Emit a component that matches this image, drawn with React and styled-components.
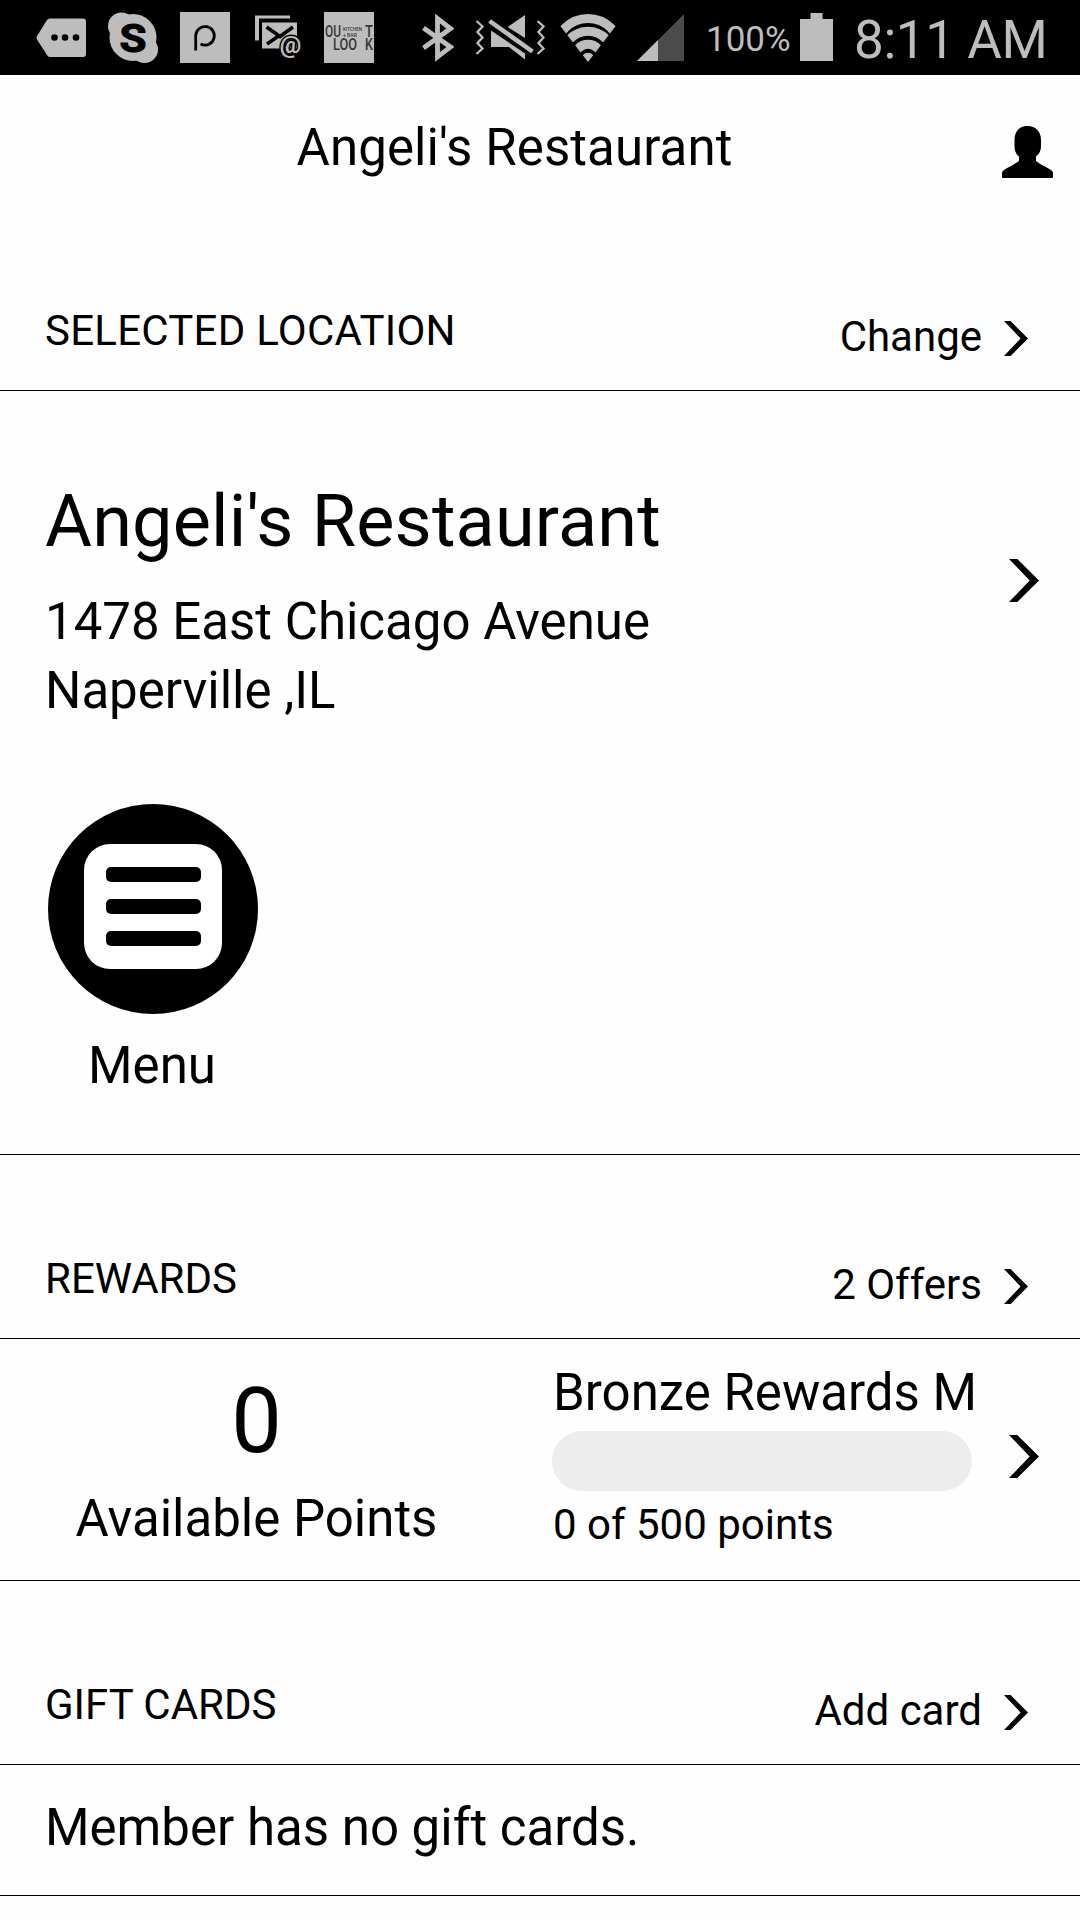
import styled, { createGlobalStyle } from "styled-components";

const GlobalStyle = createGlobalStyle`
  * {
    box-sizing: border-box;
  }
  body {
    margin: 0;
    background-color: #fefefe;
    color: #000;
    font-family: Roboto, "Liberation Sans", sans-serif;
  }
  svg {
    display: block;
    flex-shrink: 0;
  }
`;

const Screen = styled.div`
  width: 1080px;
  height: 1920px;
  overflow: hidden;
  display: flex;
  flex-direction: column;
`;

const StatusBar = styled.div`
  height: 75px;
  flex-shrink: 0;
  padding-left: 36px;
  background-color: #000;
  color: #bdbdbd;
  display: flex;
  align-items: center;
`;
const Notifications = styled.div`
  display: flex;
  align-items: center;
  gap: 22px;
`;
const StatusItem = styled.div`
  margin-left: ${(props) => props.$left}px;
`;
const BatteryText = styled.span`
  width: 94px;
  margin-left: 22px;
  padding-top: 5px;
  font-size: 35px;
  line-height: 42px;
`;
const Clock = styled.span`
  margin-left: 21px;
  padding-top: 5px;
  font-size: 53px;
  line-height: 64px;
  letter-spacing: -0.4px;
  white-space: nowrap;
`;

const AppBar = styled.header`
  height: 231px;
  flex-shrink: 0;
  padding: 42px 27px 0;
  display: flex;
  align-items: flex-start;
`;
const AppTitle = styled.h1`
  flex: 1;
  margin: 0;
  font-size: 51px;
  font-weight: 400;
  line-height: 62px;
  letter-spacing: 0.1px;
  text-align: center;
`;
const UserButton = styled.div`
  padding-top: 9px;
`;

const SectionHeader = styled.div`
  height: 85px;
  flex-shrink: 0;
  margin-top: ${(props) => props.$top || 0}px;
  padding: 0 52px 0 45px;
  border-bottom: 1px solid #000;
  display: flex;
  justify-content: space-between;
  align-items: flex-start;
  font-size: 42px;
  line-height: 50px;
`;
const SectionTitle = styled.span`
  letter-spacing: ${(props) => props.$tracking || 0}px;
`;
const SectionAction = styled.div`
  padding-top: 6px;
  display: flex;
  gap: 22px;
  svg {
    margin-top: 9px;
  }
`;

const LocationBody = styled.section`
  height: 764px;
  flex-shrink: 0;
  padding: 87px 41px 0 45px;
  border-bottom: 1px solid #000;
`;
const LocationRow = styled.div`
  display: flex;
  justify-content: space-between;
  align-items: center;
  height: 205px;
`;
const LocationInfo = styled.div`
  align-self: flex-start;
`;
const LocationName = styled.h2`
  margin: 0 0 21px;
  font-size: 72px;
  font-weight: 400;
  line-height: 88px;
  letter-spacing: 0.17px;
`;
const Address = styled.p`
  margin: 0;
  font-size: 51px;
  line-height: 69px;
`;
const MenuTile = styled.div`
  width: 210px;
  margin: 121px 0 0 3px;
  display: flex;
  flex-direction: column;
  align-items: center;
  gap: 21px;
  font-size: 51px;
  line-height: 62px;
`;
const MenuLabel = styled.span`
  padding-right: 2px;
`;
const MenuCircle = styled.div`
  width: 210px;
  height: 210px;
  border-radius: 50%;
  background-color: #000;
  padding-bottom: 5px;
  display: flex;
  align-items: center;
  justify-content: center;
`;
const MenuCard = styled.div`
  width: 138px;
  height: 125px;
  border-radius: 26px;
  background-color: #fff;
  display: flex;
  flex-direction: column;
  align-items: center;
  justify-content: center;
  gap: 17px;
`;
const MenuLine = styled.div`
  width: 95px;
  height: 15px;
  border-radius: 5px;
  background-color: #000;
`;

const RewardsBody = styled.section`
  height: 242px;
  flex-shrink: 0;
  padding-right: 41px;
  border-bottom: 1px solid #000;
  display: flex;
  align-items: flex-start;
`;
const Points = styled.div`
  width: 513px;
  padding-top: 29px;
  text-align: center;
  font-size: 51px;
  line-height: 62px;
`;
const PointsValue = styled.div`
  font-size: 90px;
  line-height: 108px;
  margin-bottom: 12px;
`;
const Level = styled.div`
  width: 426px;
  margin-left: 39px;
  padding-top: 23px;
  font-size: 42px;
  line-height: 50px;
  white-space: nowrap;
`;
const LevelName = styled.div`
  font-size: 51px;
  line-height: 62px;
  padding-left: 1px;
`;
const Progress = styled.div`
  width: 420px;
  height: 60px;
  margin: 7px 0 9px;
  border-radius: 30px;
  background-color: #ededed;
`;
const ProgressText = styled.div`
  padding-left: 1px;
`;
const RewardsArrow = styled.div`
  margin-left: auto;
  padding-top: 96px;
`;

const GiftBody = styled.section`
  height: 131px;
  flex-shrink: 0;
  padding: 32px 45px 0;
  border-bottom: 1px solid #000;
  font-size: 51px;
  line-height: 62px;
`;

const Arrow = ({ large }) => (
  <svg width={large ? 30 : 24} height={large ? 43 : 35} viewBox="0 0 29 43" preserveAspectRatio="none">
    <path d="M0 0H8L29 21.5L8 43H0L20 21.5Z" />
  </svg>
);

const UserIcon = () => (
  <svg width="51" height="52" viewBox="0 0 51 52">
    <path d="M25.500 0C34 0 39 6 39 14V20C39 25 37 28 34 30.500V35C39 39 45 41 49 44Q51 45.500 51 47V51Q51 52 50 52H1Q0 52 0 51V47Q0 45.500 2 44C6 41 12 39 17 35V30.500C14 28 12.500 25 12.500 20V14C12.500 6 17 0 25.500 0Z" />
  </svg>
);

const MoreIcon = () => (
  <svg width="50" height="40" viewBox="0 0 50 40" fill="#bdbdbd">
    <path d="M14 0.500H47Q50 0.500 50 3.500V36Q50 39 47 39H14Q12 39 11 37L1 21.500Q0 19.500 1 18L11 2Q12 0.500 14 0.500Z" />
    <g fill="#000">
      <circle cx="18.500" cy="19.500" r="3.300" />
      <circle cx="29" cy="19.500" r="3.300" />
      <circle cx="40" cy="19.500" r="3.300" />
    </g>
  </svg>
);

const SkypeIcon = () => (
  <svg width="50" height="51" viewBox="0 0 50 51" fill="#bdbdbd">
    <circle cx="25" cy="25.500" r="23.500" />
    <circle cx="13.500" cy="14" r="13.500" />
    <circle cx="36.500" cy="37.500" r="13.500" />
    <text
      x="25"
      y="39.500"
      fill="#000"
      stroke="#000"
      strokeWidth="1"
      fontFamily="Roboto, sans-serif"
      fontWeight="700"
      fontSize="39"
      textAnchor="middle"
      textLength="27"
      lengthAdjust="spacingAndGlyphs"
    >
      S
    </text>
  </svg>
);

const PIcon = () => (
  <svg width="50" height="51" viewBox="0 0 50 51">
    <rect width="50" height="51" fill="#bdbdbd" />
    <path d="M15.700 38.500V23.500A9.300 9.300 0 1 1 20.500 32" fill="none" stroke="#000" strokeWidth="2.800" />
  </svg>
);

const MailIcon = () => (
  <svg width="50" height="46" viewBox="-3 0 50 46" fill="#bdbdbd">
    <path d="M0 0.500H35V3.500H4V25.500H0Z" />
    <path d="M7 7.500H42V33.500H7Z" />
    <path d="M11.500 12L25 21.500L38 12M25 20L12 29" stroke="#000" strokeWidth="3.500" fill="none" />
    <text
      x="35.500"
      y="38"
      textAnchor="middle"
      fontFamily="Roboto, sans-serif"
      fontSize="24"
      fontWeight="700"
      stroke="#000"
      strokeWidth="3"
      paintOrder="stroke"
    >
      @
    </text>
  </svg>
);

const OutlookIcon = () => (
  <svg width="50" height="51" viewBox="0 0 50 51" fontFamily="Roboto, sans-serif" fontSize="16.500" fontWeight="500" fill="#3a3634">
    <rect width="50" height="51" fill="#bdbdbd" />
    <text x="1" y="24.500" textLength="16" lengthAdjust="spacingAndGlyphs">OU</text>
    <text x="41" y="24.500" textLength="8" lengthAdjust="spacingAndGlyphs">T</text>
    <text x="9" y="37.500" textLength="24" lengthAdjust="spacingAndGlyphs">LOO</text>
    <text x="41" y="37.500" textLength="8" lengthAdjust="spacingAndGlyphs">K</text>
    <text x="19" y="18.500" fontSize="5" textLength="19" lengthAdjust="spacingAndGlyphs">KITCHEN</text>
    <text x="19" y="24.500" fontSize="5" textLength="14" lengthAdjust="spacingAndGlyphs">+ BAR</text>
  </svg>
);

const BluetoothIcon = () => (
  <svg width="32" height="48" viewBox="0 0 32 48">
    <path d="M1.500 14L28.500 33L15.500 43V4.500L28.500 14.500L1.500 34" fill="none" stroke="#bdbdbd" strokeWidth="4.800" />
  </svg>
);

const MuteIcon = () => (
  <svg width="70" height="50" viewBox="0 -4 70 50" fill="#bdbdbd">
    <path d="M50 -2V21L32.700 10Z" />
    <path d="M16 13.500L50 36.500V42.500L34 30H16Z" />
    <path d="M14.500 4L57.500 34.500" stroke="#000" strokeWidth="9" />
    <path d="M14.500 4L57.500 34.500" stroke="#bdbdbd" strokeWidth="4.500" />
    <path
      d="M1.500 4L7.500 9.500L2.500 15L7.500 20.500L2.500 26L7.500 31.500L1.500 37M62.500 4L68.500 9.500L63.500 15L68.500 20.500L63.500 26L68.500 31.500L62.500 37"
      fill="none"
      stroke="#bdbdbd"
      strokeWidth="2.300"
    />
  </svg>
);

const WifiIcon = () => (
  <svg width="56" height="48" viewBox="0 0 56 48">
    <clipPath id="wifi-wedge">
      <path d="M0.500 12.300L0 0H56L55.500 12.300L28 48Z" />
    </clipPath>
    <g clipPath="url(#wifi-wedge)" fill="none" stroke="#bdbdbd" strokeWidth="9">
      <circle cx="28" cy="37" r="32.500" />
      <circle cx="28" cy="42.200" r="25" />
      <circle cx="28" cy="44" r="13.700" />
      <circle cx="28" cy="45.700" r="7" fill="#bdbdbd" stroke="none" />
    </g>
  </svg>
);

const SignalIcon = () => (
  <svg width="47" height="47" viewBox="0 0 47 47">
    <path d="M47 0V47H0Z" fill="#4b4b4b" />
    <path d="M21 26V47H0Z" fill="#bdbdbd" />
  </svg>
);

const BatteryIcon = () => (
  <svg width="33" height="50" viewBox="0 0 33 50">
    <path d="M10.500 0H22.500V6H33V48H0V6H10.500Z" fill="#bdbdbd" />
  </svg>
);

function App() {
  return (
    <>
      <GlobalStyle />
      <Screen>
        <StatusBar>
          <Notifications>
            <MoreIcon />
            <SkypeIcon />
            <PIcon />
            <MailIcon />
            <OutlookIcon />
          </Notifications>
          <StatusItem $left={48}>
            <BluetoothIcon />
          </StatusItem>
          <StatusItem $left={21}>
            <MuteIcon />
          </StatusItem>
          <StatusItem $left={15}>
            <WifiIcon />
          </StatusItem>
          <StatusItem $left={21}>
            <SignalIcon />
          </StatusItem>
          <BatteryText>100%</BatteryText>
          <StatusItem $left={0}>
            <BatteryIcon />
          </StatusItem>
          <Clock>8:11 AM</Clock>
        </StatusBar>

        <AppBar>
          <AppTitle>Angeli's Restaurant</AppTitle>
          <UserButton>
            <UserIcon />
          </UserButton>
        </AppBar>

        <SectionHeader>
          <SectionTitle $tracking={0.25}>SELECTED LOCATION</SectionTitle>
          <SectionAction>
            Change
            <Arrow />
          </SectionAction>
        </SectionHeader>
        <LocationBody>
          <LocationRow>
            <LocationInfo>
              <LocationName>Angeli's Restaurant</LocationName>
              <Address>
                1478 East Chicago Avenue <br />
                Naperville ,IL
              </Address>
            </LocationInfo>
            <Arrow large />
          </LocationRow>
          <MenuTile>
            <MenuCircle>
              <MenuCard>
                <MenuLine />
                <MenuLine />
                <MenuLine />
              </MenuCard>
            </MenuCircle>
            <MenuLabel>Menu</MenuLabel>
          </MenuTile>
        </LocationBody>

        <SectionHeader $top={99}>
          <SectionTitle>REWARDS</SectionTitle>
          <SectionAction>
            2 Offers
            <Arrow />
          </SectionAction>
        </SectionHeader>
        <RewardsBody>
          <Points>
            <PointsValue>0</PointsValue>
            Available Points
          </Points>
          <Level>
            <LevelName>Bronze Rewards M</LevelName>
            <Progress />
            <ProgressText>0 of 500 points</ProgressText>
          </Level>
          <RewardsArrow>
            <Arrow large />
          </RewardsArrow>
        </RewardsBody>

        <SectionHeader $top={99}>
          <SectionTitle>GIFT CARDS</SectionTitle>
          <SectionAction>
            Add card
            <Arrow />
          </SectionAction>
        </SectionHeader>
        <GiftBody>Member has no gift cards.</GiftBody>
      </Screen>
    </>
  );
}

export default App;
